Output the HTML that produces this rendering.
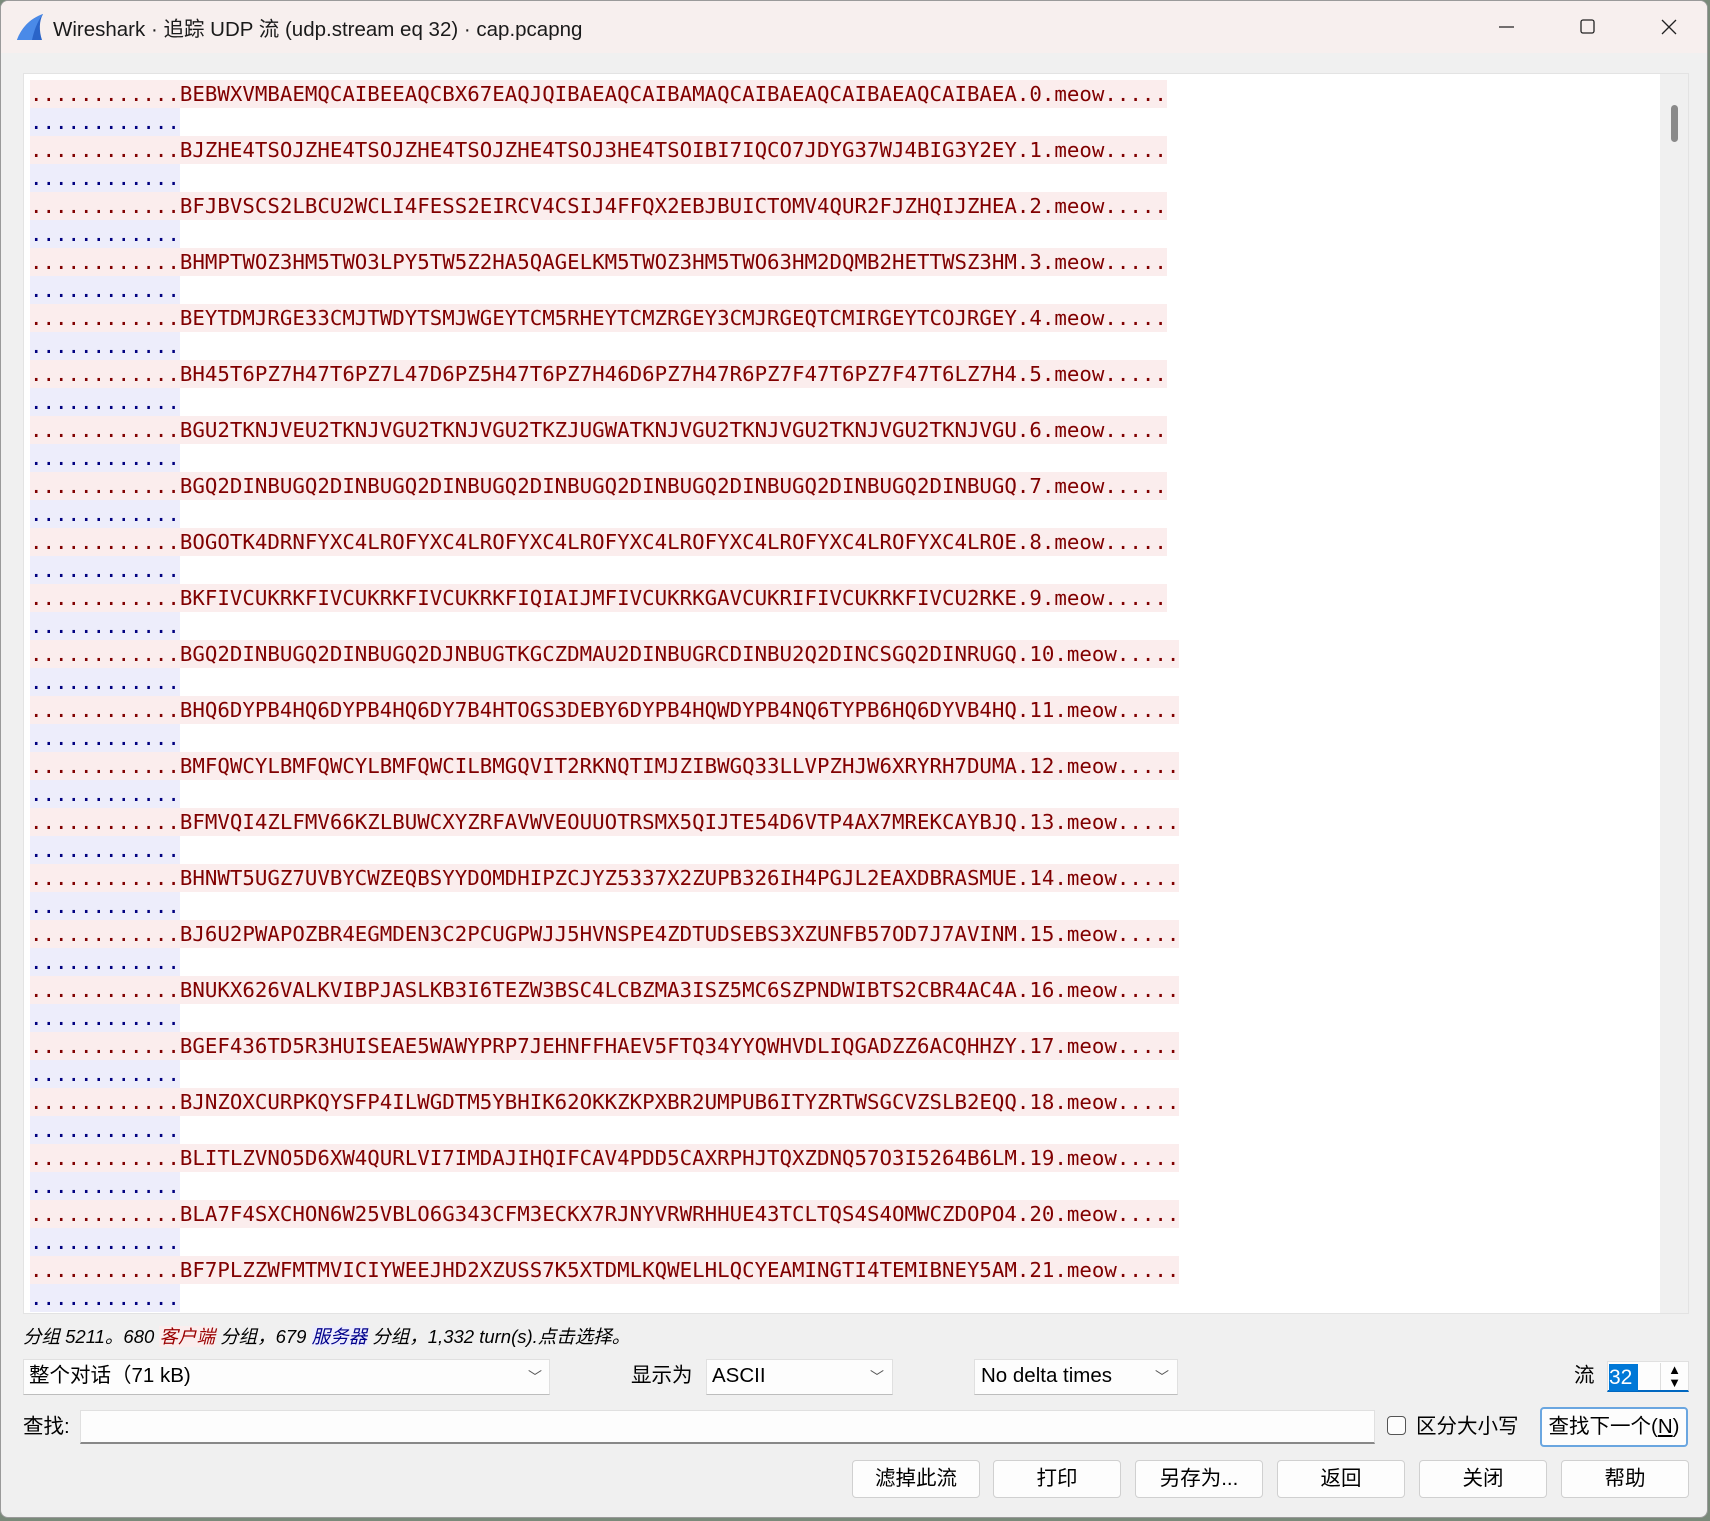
<!DOCTYPE html>
<html><head><meta charset="utf-8"><style>
*{box-sizing:border-box;margin:0;padding:0}
body{width:1710px;height:1521px;background:#7a8a7a;position:relative;overflow:hidden;font-family:"Liberation Sans","Noto Sans CJK SC",sans-serif}
#win{position:absolute;left:0;top:0;width:1708px;height:1518px;background:#f0f0f0;border:1px solid #9a9a9a;border-radius:8px;overflow:hidden}
#title{position:absolute;left:0;top:0;width:100%;height:52px;background:#f7efee}
#title .t{position:absolute;left:52px;top:11px;font-size:20.5px;color:#1a1a1a}
.ab{position:absolute}
#text{position:absolute;left:22px;top:72px;width:1666px;height:1241px;background:#fff;border:1px solid #e3e3e3;overflow:hidden}
#sb{position:absolute;left:1636px;top:0;width:30px;height:100%;background:#f0f0f0}
#thumb{position:absolute;left:11px;top:31px;width:7px;height:37px;background:#8a8a8a;border-radius:4px}
.ln{position:absolute;left:6px;height:28px;font-family:"DejaVu Sans Mono","Liberation Mono",monospace;font-size:20.76px;line-height:28px;white-space:pre}
.c{background:#fbeded;color:#800000}
.s{background:#ededfb;color:#000080}
.ui{position:absolute;font-size:20.5px;color:#000;white-space:nowrap;line-height:26px}
.box{position:absolute;background:#fdfdfd;border:1px solid #e0e0e0;border-bottom:1px solid #bdbdbd}
.btn{position:absolute;top:1459px;width:128px;height:38px;background:#fdfdfd;border:1px solid #d0d0d0;border-radius:4px;font-size:20.5px;text-align:center;line-height:36px}
.chev{position:absolute;font-size:14px;color:#555}
</style></head><body>
<div id="win">
<div id="title">
<svg class="ab" style="left:14px;top:12px" width="30" height="28" viewBox="0 0 30 28"><path d="M2 27 C6 16 14 6 28 1 C24 8 24 18 27 27 Z" fill="#2a64c8"/><path d="M2 27 C6 16 14 6 28 1 C22 9 19 18 17 27 Z" fill="#4a8ae8"/></svg>
<div class="t">Wireshark · 追踪 UDP 流 (udp.stream eq 32) · cap.pcapng</div>
<svg class="ab" style="left:1494px;top:15px" width="190" height="22"><line x1="4" y1="11" x2="19" y2="11" stroke="#222" stroke-width="1.3"/><rect x="86" y="4" width="13" height="13" rx="2" fill="none" stroke="#222" stroke-width="1.3"/><path d="M167 4 L181 18 M181 4 L167 18" stroke="#222" stroke-width="1.3"/></svg>
</div>
<div id="text">
<div id="rows"></div>
<div id="sb"><div id="thumb"></div></div>
</div>
<div class="ui" style="left:22px;top:1323px;font-size:18.5px;font-style:italic">分组 5211。680 <span style="color:#900;background:#fbeded">客户端</span> 分组，679 <span style="color:#00008b;background:#ededfb">服务器</span> 分组，1,332 turn(s).点击选择。</div>
<div class="box" style="left:22px;top:1358px;width:527px;height:36px"></div>
<div class="ui" style="left:28px;top:1362px">整个对话（71 kB)</div>
<div class="chev" style="left:527px;top:1366px">﹀</div>
<div class="ui" style="left:630px;top:1362px">显示为</div>
<div class="box" style="left:705px;top:1358px;width:187px;height:36px"></div>
<div class="ui" style="left:711px;top:1362px">ASCII</div>
<div class="chev" style="left:869px;top:1366px">﹀</div>
<div class="box" style="left:973px;top:1358px;width:204px;height:36px"></div>
<div class="ui" style="left:980px;top:1362px">No delta times</div>
<div class="chev" style="left:1154px;top:1366px">﹀</div>
<div class="ui" style="left:1573px;top:1362px">流</div>
<div class="box" style="left:1606px;top:1360px;width:82px;height:31px;border-bottom:2px solid #0067c0"></div>
<div class="ab" style="left:1608px;top:1363px;width:29px;height:27px;background:#0078d7;color:#fff;font-size:21px;line-height:27px">32</div>
<div class="ab" style="left:1659px;top:1362px;width:28px;height:27px;font-size:13px;line-height:13px;text-align:center;border-left:1px solid #ddd">▲<br>▼</div>
<div class="ui" style="left:22px;top:1413px">查找:</div>
<div class="box" style="left:79px;top:1409px;width:1295px;height:34px;border-bottom:2px solid #888"></div>
<div class="ab" style="left:1386px;top:1415px;width:19px;height:19px;border:1px solid #555;border-radius:4px;background:#fdfdfd"></div>
<div class="ui" style="left:1415px;top:1413px">区分大小写</div>
<div class="ab" style="left:1539px;top:1406px;width:148px;height:40px;border:2px solid #6aa6e0;border-radius:4px;background:#fdfdfd;font-size:20.5px;text-align:center;line-height:36px">查找下一个(<u>N</u>)</div>
<div class="btn" style="left:851px">滤掉此流</div>
<div class="btn" style="left:992px">打印</div>
<div class="btn" style="left:1134px">另存为...</div>
<div class="btn" style="left:1276px">返回</div>
<div class="btn" style="left:1418px">关闭</div>
<div class="btn" style="left:1560px">帮助</div>
</div>
<script>
var d=["BEBWXVMBAEMQCAIBEEAQCBX67EAQJQIBAEAQCAIBAMAQCAIBAEAQCAIBAEAQCAIBAEA","BJZHE4TSOJZHE4TSOJZHE4TSOJZHE4TSOJ3HE4TSOIBI7IQCO7JDYG37WJ4BIG3Y2EY","BFJBVSCS2LBCU2WCLI4FESS2EIRCV4CSIJ4FFQX2EBJBUICTOMV4QUR2FJZHQIJZHEA","BHMPTWOZ3HM5TWO3LPY5TW5Z2HA5QAGELKM5TWOZ3HM5TWO63HM2DQMB2HETTWSZ3HM","BEYTDMJRGE33CMJTWDYTSMJWGEYTCM5RHEYTCMZRGEY3CMJRGEQTCMIRGEYTCOJRGEY","BH45T6PZ7H47T6PZ7L47D6PZ5H47T6PZ7H46D6PZ7H47R6PZ7F47T6PZ7F47T6LZ7H4","BGU2TKNJVEU2TKNJVGU2TKNJVGU2TKZJUGWATKNJVGU2TKNJVGU2TKNJVGU2TKNJVGU","BGQ2DINBUGQ2DINBUGQ2DINBUGQ2DINBUGQ2DINBUGQ2DINBUGQ2DINBUGQ2DINBUGQ","BOGOTK4DRNFYXC4LROFYXC4LROFYXC4LROFYXC4LROFYXC4LROFYXC4LROFYXC4LROE","BKFIVCUKRKFIVCUKRKFIVCUKRKFIQIAIJMFIVCUKRKGAVCUKRIFIVCUKRKFIVCU2RKE","BGQ2DINBUGQ2DINBUGQ2DJNBUGTKGCZDMAU2DINBUGRCDINBU2Q2DINCSGQ2DINRUGQ","BHQ6DYPB4HQ6DYPB4HQ6DY7B4HTOGS3DEBY6DYPB4HQWDYPB4NQ6TYPB6HQ6DYVB4HQ","BMFQWCYLBMFQWCYLBMFQWCILBMGQVIT2RKNQTIMJZIBWGQ33LLVPZHJW6XRYRH7DUMA","BFMVQI4ZLFMV66KZLBUWCXYZRFAVWVEOUUOTRSMX5QIJTE54D6VTP4AX7MREKCAYBJQ","BHNWT5UGZ7UVBYCWZEQBSYYDOMDHIPZCJYZ5337X2ZUPB326IH4PGJL2EAXDBRASMUE","BJ6U2PWAPOZBR4EGMDEN3C2PCUGPWJJ5HVNSPE4ZDTUDSEBS3XZUNFB57OD7J7AVINM","BNUKX626VALKVIBPJASLKB3I6TEZW3BSC4LCBZMA3ISZ5MC6SZPNDWIBTS2CBR4AC4A","BGEF436TD5R3HUISEAE5WAWYPRP7JEHNFFHAEV5FTQ34YYQWHVDLIQGADZZ6ACQHHZY","BJNZOXCURPKQYSFP4ILWGDTM5YBHIK62OKKZKPXBR2UMPUB6ITYZRTWSGCVZSLB2EQQ","BLITLZVNO5D6XW4QURLVI7IMDAJIHQIFCAV4PDD5CAXRPHJTQXZDNQ57O3I5264B6LM","BLA7F4SXCHON6W25VBLO6G343CFM3ECKX7RJNYVRWRHHUE43TCLTQS4S4OMWCZDOPO4","BF7PLZZWFMTMVICIYWEEJHD2XZUSS7K5XTDMLKQWELHLQCYEAMINGTI4TEMIBNEY5AM"];
var h="";for(var i=0;i<d.length;i++){var y=6+56*i;h+='<div class="ln c" style="top:'+y+'px">............'+d[i]+'.'+i+'.meow.....</div><div class="ln s" style="top:'+(y+28)+'px">............</div>';}
document.getElementById("rows").innerHTML=h;
</script>
</body></html>
